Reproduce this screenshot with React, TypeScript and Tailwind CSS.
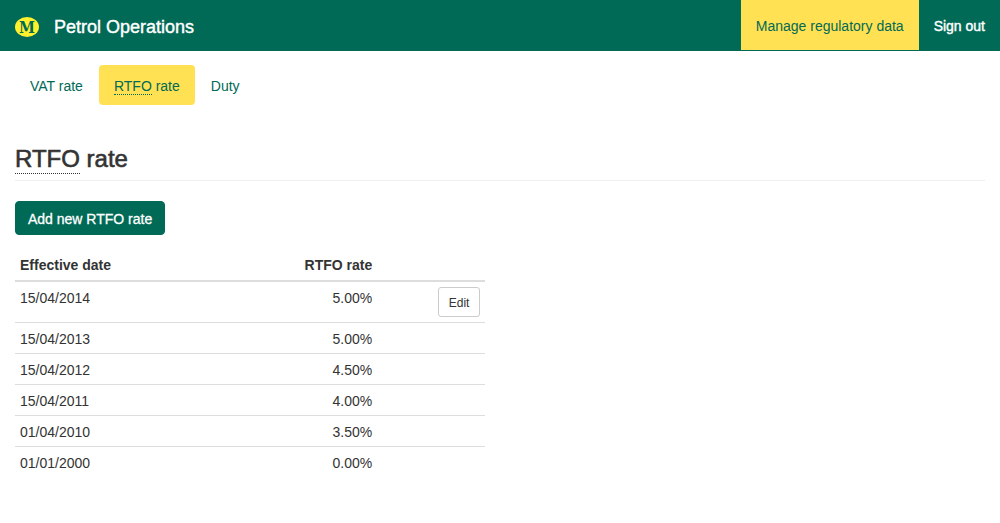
import type { ReactNode } from "react";

const rates = [
  { date: "15/04/2014", rate: "5.00%", editable: true },
  { date: "15/04/2013", rate: "5.00%", editable: false },
  { date: "15/04/2012", rate: "4.50%", editable: false },
  { date: "15/04/2011", rate: "4.00%", editable: false },
  { date: "01/04/2010", rate: "3.50%", editable: false },
  { date: "01/01/2000", rate: "0.00%", editable: false },
];

function Logo() {
  return (
    <svg width="24" height="20" viewBox="0 0 24 20" aria-hidden="true">
      <ellipse cx="12" cy="10" rx="12" ry="10" fill="#fff22d" />
      <text
        x="12"
        y="16"
        textAnchor="middle"
        fontFamily="'DejaVu Serif Condensed', 'DejaVu Serif', serif"
        fontWeight="700"
        fontSize="16"
        fill="#006a56"
      >
        M
      </text>
    </svg>
  );
}

function Tab({ active = false, children }: { active?: boolean; children: ReactNode }) {
  return (
    <li>
      <a
        href="#"
        aria-current={active ? "page" : undefined}
        className={
          active
            ? "block rounded bg-[#ffe153] px-[15px] pt-[11px] pb-[9px] text-[#006a56]"
            : "block rounded px-[15px] pt-[11px] pb-[9px] text-[#006a56]"
        }
      >
        {children}
      </a>
    </li>
  );
}

export default function App() {
  return (
    <div className="bg-white font-['Liberation_Sans',Arial,sans-serif] text-[14px] leading-5 text-[#333333]">
      <header className="flex justify-between border-b border-[#006a56] bg-[#006a56]">
        <a href="#" className="flex items-center gap-[15px] px-[15px] pt-[17px] pb-[13px] text-[18px] leading-5 text-white">
          <Logo />
          <span className="[-webkit-text-stroke:0.4px_currentColor]">Petrol Operations</span>
        </a>
        <nav className="flex">
          <a href="#" aria-current="page" className="bg-[#ffe153] px-[15px] pt-4 pb-[14px] text-[#006a56]">
            Manage regulatory data
          </a>
          <a href="#" className="px-[15px] pt-4 pb-[14px] text-white [-webkit-text-stroke:0.4px_currentColor]">
            Sign out
          </a>
        </nav>
      </header>

      <main className="px-[15px] pt-[14px]">
        <ul className="flex gap-px">
          <Tab>VAT rate</Tab>
          <Tab active>
            <abbr className="border-b border-dotted border-[#006a56]">RTFO</abbr> rate
          </Tab>
          <Tab>Duty</Tab>
        </ul>

        <h1 className="mt-[41px] mb-5 border-b border-[#eeeeee] pb-2 text-[24px] leading-[26px] [-webkit-text-stroke:0.6px_currentColor]">
          <abbr className="border-b border-dotted border-[#333333] pb-px">RTFO</abbr> rate
        </h1>

        <button
          type="button"
          className="block rounded border border-[#006a56] bg-[#006a56] px-3 pt-[7px] pb-[5px] text-white [-webkit-text-stroke:0.3px_currentColor]"
        >
          Add new RTFO rate
        </button>

        <table className="mt-[15px] w-[48.5%] table-fixed border-collapse">
          <thead>
            <tr className="border-b-2 border-[#dddddd]">
              <th scope="col" className="w-1/2 p-[5px] text-left font-bold">
                Effective date
              </th>
              <th scope="col" className="w-[27%] p-[5px] text-right font-bold">
                RTFO rate
              </th>
              <td className="p-[5px]" />
            </tr>
          </thead>
          <tbody>
            {rates.map((row) => (
              <tr key={row.date} className="border-b border-[#dddddd] align-top last:border-b-0">
                <td className="px-[5px] pt-[6px] pb-1">{row.date}</td>
                <td className="px-[5px] pt-[6px] pb-1 text-right">{row.rate}</td>
                <td className="p-[5px] text-right">
                  {row.editable && (
                    <button
                      type="button"
                      className="ml-auto block rounded-[3px] border border-[#cccccc] bg-white px-[10px] pt-[6px] pb-1 text-[12px] leading-[18px]"
                    >
                      Edit
                    </button>
                  )}
                </td>
              </tr>
            ))}
          </tbody>
        </table>
      </main>
    </div>
  );
}
